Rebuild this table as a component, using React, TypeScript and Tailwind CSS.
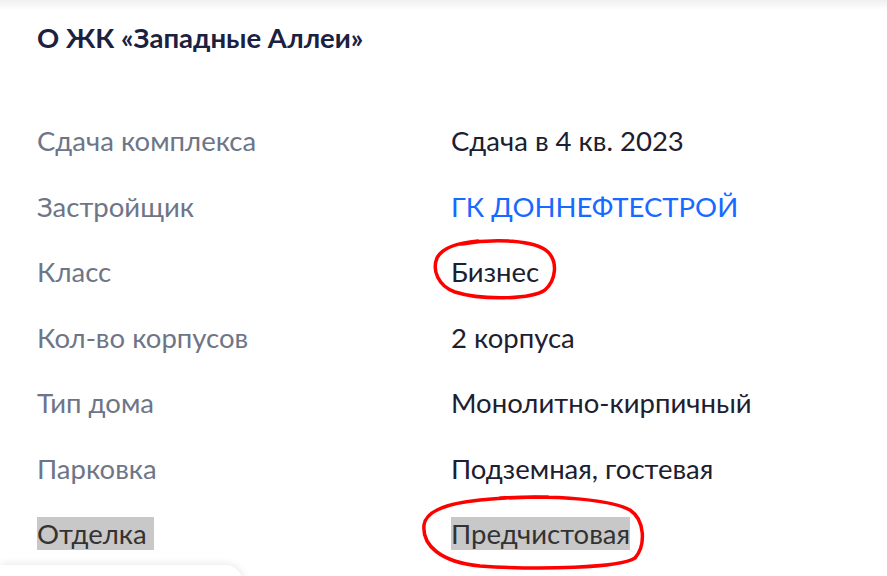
import React from "react";

const rows: { label: string; value: string; link?: boolean; selected?: boolean }[] = [
  { label: "Сдача комплекса", value: "Сдача в 4 кв. 2023" },
  { label: "Застройщик", value: "ГК ДОННЕФТЕСТРОЙ", link: true },
  { label: "Класс", value: "Бизнес" },
  { label: "Кол-во корпусов", value: "2 корпуса" },
  { label: "Тип дома", value: "Монолитно-кирпичный" },
  { label: "Парковка", value: "Подземная, гостевая" },
  { label: "Отделка\u00a0", value: "Предчистовая", selected: true },
];

export default function App() {
  return (
    <div
      className="relative w-[887px] h-[576px] overflow-hidden bg-white"
      style={{ fontFamily: "Lato, 'Noto Sans', sans-serif" }}
    >
      <div className="h-[10px] bg-gradient-to-b from-[#f0f0f0] to-white" />

      <div className="pl-[37px]">
        <h2 className="mt-[11px] text-[27.5px] leading-[34px] font-bold text-[#1b2140]">
          О ЖК «Западные Аллеи»
        </h2>

        <div className="mt-[53px]">
          {rows.map((r) => (
            <div key={r.label} className="flex items-center h-[65.5px] text-[27.5px] leading-[39px]">
              <div className="w-[414px] text-[#6e7587]">
                <span className={r.selected ? "bg-[#c8c8c8] text-[#333333]" : ""}>{r.label}</span>
              </div>
              <div className={r.link ? "text-[#1769ff]" : "text-[#1c2030]"}>
                <span className={r.selected ? "bg-[#c8c8c8] text-[#333333]" : ""}>{r.value}</span>
              </div>
            </div>
          ))}
        </div>
      </div>

      {/* hand-drawn marks */}
      <svg className="absolute inset-0 pointer-events-none" width="887" height="576">
        <g fill="none" stroke="#ff0000" strokeWidth="3.5" strokeLinecap="round" strokeLinejoin="round">
          <path d="M 462 244 C 495 238, 535 240, 548 252 C 558 262, 556 280, 545 290 C 530 300, 480 300, 455 292 C 438 286, 432 270, 437 258 C 442 248, 455 243, 478 241" />
          <path d="M 500 498 C 560 495, 612 500, 630 510 C 645 520, 646 545, 635 558 C 620 568, 540 570, 480 566 C 440 562, 422 545, 424 525 C 426 510, 450 503, 480 500 C 500 498, 525 497, 548 497" />
        </g>
      </svg>

      <div className="absolute left-0 top-[565px] w-[242px] h-[40px] bg-white rounded-tr-[16px] shadow-[0_0_10px_rgba(0,0,0,0.12)]" />
    </div>
  );
}
